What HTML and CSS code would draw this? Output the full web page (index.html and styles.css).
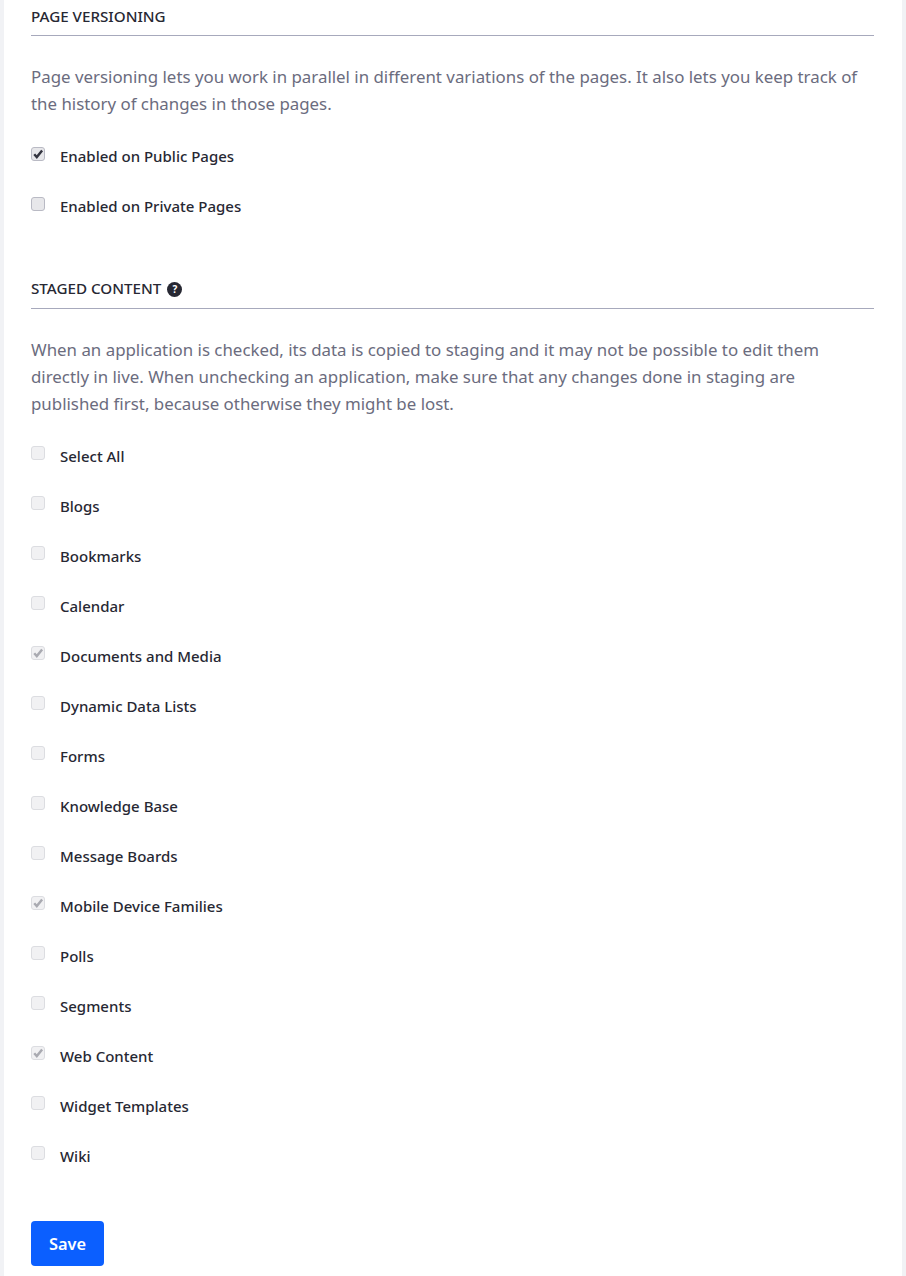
FILE: index.html
```html
<!DOCTYPE html>
<html lang="en">

<head>
    <meta charset="UTF-8">
    <title>Staging</title>
    <link rel="stylesheet" href="styles.css">
</head>

<body>
    <main class="sheet">

        <section class="block">
            <h3 class="sheet-subtitle">PAGE VERSIONING</h3>
            <p class="help">Page versioning lets you work in parallel in different variations of the pages. It also lets you keep track of the history of changes in those pages.</p>
            <div class="options">
                <label class="option"><span class="box"><svg viewBox="0 0 14 14"><path d="M2.6 7.2 5.6 10.6 11.8 2.8" /></svg></span>Enabled on Public Pages</label>
                <label class="option"><span class="box"></span>Enabled on Private Pages</label>
            </div>
        </section>

        <section class="block staged">
            <h3 class="sheet-subtitle">STAGED CONTENT <span class="hint">?</span></h3>
            <p class="help">When an application is checked, its data is copied to staging and it may not be possible to edit them directly in live. When unchecking an application, make sure that any changes done in staging are published first, because otherwise they might be lost.</p>
            <div class="options disabled">
                <label class="option"><span class="box"></span>Select All</label>
                <label class="option"><span class="box"></span>Blogs</label>
                <label class="option"><span class="box"></span>Bookmarks</label>
                <label class="option"><span class="box"></span>Calendar</label>
                <label class="option"><span class="box"><svg viewBox="0 0 14 14"><path d="M2.6 7.2 5.6 10.6 11.8 2.8" /></svg></span>Documents and Media</label>
                <label class="option"><span class="box"></span>Dynamic Data Lists</label>
                <label class="option"><span class="box"></span>Forms</label>
                <label class="option"><span class="box"></span>Knowledge Base</label>
                <label class="option"><span class="box"></span>Message Boards</label>
                <label class="option"><span class="box"><svg viewBox="0 0 14 14"><path d="M2.6 7.2 5.6 10.6 11.8 2.8" /></svg></span>Mobile Device Families</label>
                <label class="option"><span class="box"></span>Polls</label>
                <label class="option"><span class="box"></span>Segments</label>
                <label class="option"><span class="box"><svg viewBox="0 0 14 14"><path d="M2.6 7.2 5.6 10.6 11.8 2.8" /></svg></span>Web Content</label>
                <label class="option"><span class="box"></span>Widget Templates</label>
                <label class="option"><span class="box"></span>Wiki</label>
            </div>
        </section>

        <button class="save">Save</button>
    </main>
</body>

</html>
```

FILE: styles.css
```css
html, body {
    margin: 0;
    height: 1276px;
    overflow: hidden;
}

body {
    background-color: #f1f2f5;
    font-family: "Noto Sans", "Open Sans", sans-serif;
    color: #272833;
}

.sheet {
    margin: 0 4px;
    padding: 0 28px 0 27px;
    height: 1276px;
    box-sizing: border-box;
    background-color: white;
}

.block {
    padding-top: 8px;
}

.staged {
    padding-top: 50px;
}

.sheet-subtitle {
    margin: 0;
    height: 27px;
    line-height: 17px;
    font-size: 15.2px;
    font-weight: 500;
    border-bottom: 1px solid #a7a9bc;
}

.staged .sheet-subtitle {
    line-height: 15px;
}

.hint {
    display: inline-block;
    width: 15px;
    height: 15px;
    margin-left: 2px;
    border-radius: 50%;
    background-color: #272833;
    color: white;
    font-size: 10px;
    font-weight: 700;
    line-height: 15px;
    text-align: center;
    vertical-align: 1px;
}

.help {
    margin: 27px 0 0;
    font-size: 16.88px;
    line-height: 27px;
    color: #6b6c7e;
}

.options {
    margin-top: 14px;
}

.option {
    display: flex;
    align-items: center;
    height: 50px;
    font-size: 15px;
    font-weight: 500;
}

.box {
    position: relative;
    top: -2px;
    width: 14px;
    height: 14px;
    margin-right: 15px;
    border: 1px solid #b9bac4;
    border-radius: 3px;
    box-sizing: border-box;
    background-color: #e7e7ea;
}

.box svg {
    display: block;
    width: 12px;
    height: 12px;
}

.box path {
    fill: none;
    stroke: #33343f;
    stroke-width: 2.8;
}

.disabled .box {
    top: -3px;
    background-color: #f1f1f3;
    border-color: #dcdde1;
}

.disabled .box path {
    stroke: #a9aab1;
}

.save {
    display: block;
    margin-top: 40px;
    width: 73px;
    height: 45px;
    border: 0;
    border-radius: 4px;
    background-color: #0b5fff;
    color: white;
    font-family: inherit;
    font-size: 16.4px;
    font-weight: 600;
}
```
